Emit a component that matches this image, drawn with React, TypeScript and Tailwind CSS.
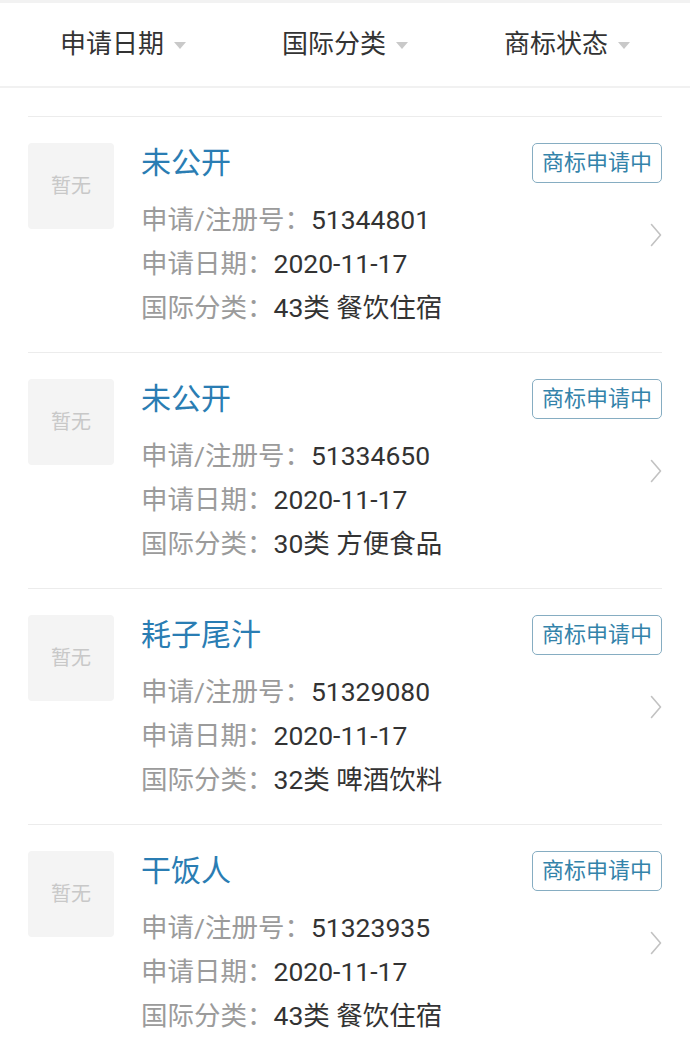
import React from 'react'

const FONT = "Roboto, 'Noto Sans CJK SC', sans-serif"

interface Mark {
  name: string
  regNo: string
  date: string
  category: string
}

const marks: Mark[] = [
  { name: '未公开', regNo: '51344801', date: '2020-11-17', category: '43类 餐饮住宿' },
  { name: '未公开', regNo: '51334650', date: '2020-11-17', category: '30类 方便食品' },
  { name: '耗子尾汁', regNo: '51329080', date: '2020-11-17', category: '32类 啤酒饮料' },
  { name: '干饭人', regNo: '51323935', date: '2020-11-17', category: '43类 餐饮住宿' },
]

const filters = ['申请日期', '国际分类', '商标状态']

function Caret() {
  return (
    <svg width="12" height="7" viewBox="0 0 12 7" className="ml-[10px] mt-[2px]">
      <polygon points="0,0 12,0 6,7" fill="#c9c9c9" />
    </svg>
  )
}

function Chevron() {
  return (
    <svg width="12" height="24" viewBox="0 0 12 24" fill="none">
      <polyline points="1.5,1.5 10.5,12 1.5,22.5" stroke="#c2c2c2" strokeWidth="1.6" strokeLinejoin="round" strokeLinecap="round" />
    </svg>
  )
}

function Row({ label, value }: { label: string; value: string }) {
  return (
    <div className="text-[26.5px] leading-[44px] whitespace-nowrap">
      <span className="text-[#9b9b9b]">{label}：</span>
      <span className="text-[#333333]">{value}</span>
    </div>
  )
}

export default function App() {
  return (
    <div className="w-[690px] h-[1048px] overflow-hidden bg-white" style={{ fontFamily: FONT }}>
      {/* filter bar */}
      <div className="border-t-[3px] border-[#f2f2f2]">
        <div className="grid grid-cols-3 px-3 h-[85px] border-b-2 border-[#f1f1f1]">
          {filters.map(f => (
            <div key={f} className="flex items-center justify-center">
              <span className="text-[26px] text-[#333333]">{f}</span>
              <Caret />
            </div>
          ))}
        </div>
      </div>

      {/* list */}
      <div className="mx-[28px] mt-[28px]">
        {marks.map((m, i) => (
          <div key={i} className="flex border-t border-[#ececec] pt-[26px] pb-[22px]">
            <div className="w-[86px] h-[86px] shrink-0 rounded-[4px] bg-[#f4f4f4] flex items-center justify-center text-[20px] text-[#c8c8c8]">
              暂无
            </div>
            <div className="flex-1 ml-[27px]">
              <div className="text-[30px] leading-[40px] text-[#2a7db3]">{m.name}</div>
              <div className="mt-[15px]">
                <Row label="申请/注册号" value={m.regNo} />
                <Row label="申请日期" value={m.date} />
                <Row label="国际分类" value={m.category} />
              </div>
            </div>
            <div className="grid">
              <div className="[grid-area:1/1] self-start justify-self-end h-[40px] px-[9px] rounded-[5px] border border-[#86adc2] text-[22px] leading-[38px] text-[#3483aa] whitespace-nowrap">
                商标申请中
              </div>
              <div className="[grid-area:1/1] self-center justify-self-end -mt-[4px]">
                <Chevron />
              </div>
            </div>
          </div>
        ))}
      </div>
    </div>
  )
}
